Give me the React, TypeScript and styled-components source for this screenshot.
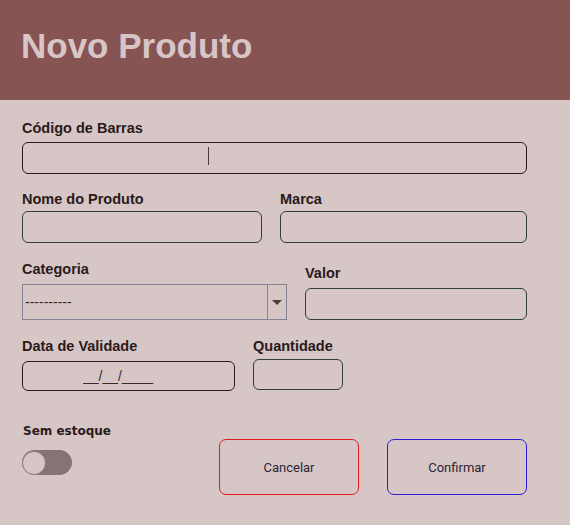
import React from "react";
import styled, { createGlobalStyle } from "styled-components";

const GlobalStyle = createGlobalStyle`
  html, body {
    margin: 0;
    padding: 0;
    background: #d6c6c6;
    font-family: "Liberation Sans", Arial, sans-serif;
  }
  * {
    box-sizing: border-box;
  }
`;

export default function App() {
  return (
    <>
      <GlobalStyle />
      <StyledPage>
        <Header>
          <h1>Novo Produto</h1>
        </Header>
        <Form onSubmit={(e) => e.preventDefault()}>
          <Field $gap={6}>
            <Label>Código de Barras</Label>
            <CaretWrap>
              <Input $height={32} $border="#2b1b1b" />
              <Caret />
            </CaretWrap>
          </Field>

          <Row $columns="240px 247px">
            <Field $gap={4}>
              <Label>Nome do Produto</Label>
              <Input $height={32} $border="#2f3e3e" />
            </Field>
            <Field $gap={4}>
              <Label>Marca</Label>
              <Input $height={32} $border="#2f3e3e" />
            </Field>
          </Row>

          <Row $columns="265px 222px" $align="end">
            <Field $gap={7}>
              <Label>Categoria</Label>
              <SelectBox>
                <Select defaultValue="">
                  <option value="">----------</option>
                </Select>
                <ArrowBox>
                  <svg width="10" height="6" viewBox="0 0 10 6">
                    <path d="M0 0 L10 0 L5 5 Z" fill="#4d3d3d" />
                  </svg>
                </ArrowBox>
              </SelectBox>
            </Field>
            <Field $gap={7}>
              <Label>Valor</Label>
              <Input $height={32} $border="#2f3e3e" />
            </Field>
          </Row>

          <Row $columns="213px 90px">
            <Field $gap={7}>
              <Label>Data de Validade</Label>
              <DateInput $height={30} $border="#2b1b1b" defaultValue="__/__/____" />
            </Field>
            <Field $gap={5}>
              <Label>Quantidade</Label>
              <Input $height={31} $border="#2f3e3e" />
            </Field>
          </Row>

          <Footer>
            <ToggleField>
              <ToggleLabel>Sem estoque</ToggleLabel>
              <Toggle type="button" aria-pressed="false">
                <Knob />
              </Toggle>
            </ToggleField>
            <Actions>
              <ActionButton type="button" $border="#e01c1c">
                Cancelar
              </ActionButton>
              <ActionButton type="submit" $border="#2a1ed2">
                Confirmar
              </ActionButton>
            </Actions>
          </Footer>
        </Form>
      </StyledPage>
    </>
  );
}

const StyledPage = styled.div`
  width: 570px;
  min-height: 525px;
  background: #d6c6c6;
`;

const Header = styled.header`
  height: 100px;
  background: #875454;
  padding: 0 0 0 21px;
  display: flex;
  align-items: flex-start;

  h1 {
    margin: 0;
    padding-top: 26px;
    font-size: 35px;
    line-height: 40px;
    font-weight: 700;
    color: #d7c5c7;
  }
`;

const Form = styled.form`
  display: flex;
  flex-direction: column;
  gap: 17px;
  padding: 20px 43px 0 22px;

  & > *:nth-child(3),
  & > *:nth-child(4) {
    margin-top: 1px;
  }
`;

const Row = styled.div<{ $columns: string; $align?: string }>`
  display: grid;
  grid-template-columns: ${({ $columns }) => $columns};
  column-gap: 18px;
  align-items: ${({ $align }) => $align || "start"};
`;

const Field = styled.div<{ $gap: number }>`
  display: flex;
  flex-direction: column;
  gap: ${({ $gap }) => $gap}px;
`;

const Label = styled.label`
  font-size: 14.5px;
  line-height: 16px;
  font-weight: 700;
  color: #2a1a1a;
`;

const Input = styled.input<{ $height: number; $border: string }>`
  width: 100%;
  height: ${({ $height }) => $height}px;
  border: 1px solid ${({ $border }) => $border};
  border-radius: 6px;
  background: transparent;
  padding: 0 8px;
  font-family: "Liberation Sans", Arial, sans-serif;
  font-size: 14px;
  color: #2a1a1a;
  outline: none;
`;

const DateInput = styled(Input)`
  padding-left: 60px;
  color: #3a2a2a;
`;

const CaretWrap = styled.div`
  position: relative;
`;

const Caret = styled.span`
  position: absolute;
  left: 186px;
  top: 5px;
  width: 1px;
  height: 18px;
  background: #4a3a3a;
`;

const SelectBox = styled.div`
  display: flex;
  height: 36px;
  border: 1px solid #858493;
`;

const Select = styled.select`
  flex: 1;
  appearance: none;
  border: none;
  background: transparent;
  padding: 0 2px;
  font-family: "Liberation Sans", Arial, sans-serif;
  font-size: 14px;
  color: #3a2a2a;
  outline: none;
`;

const ArrowBox = styled.div`
  width: 19px;
  border-left: 1px solid #858493;
  display: flex;
  align-items: center;
  justify-content: center;
  padding-top: 1px;
`;

const Footer = styled.div`
  display: flex;
  align-items: flex-start;
  margin-top: 15px;
`;

const ToggleField = styled.div`
  width: 197px;
  display: flex;
  flex-direction: column;
  gap: 11px;
`;

const ToggleLabel = styled.span`
  font-family: "DejaVu Sans", sans-serif;
  font-size: 12px;
  line-height: 16px;
  font-weight: 700;
  color: #2a1a1a;
  padding-left: 1px;
`;

const Toggle = styled.button`
  width: 50px;
  height: 25px;
  border: none;
  border-radius: 13px;
  background: #867373;
  padding: 0;
  display: flex;
  align-items: center;
  cursor: pointer;
`;

const Knob = styled.span`
  width: 24px;
  height: 24px;
  border-radius: 50%;
  background: #d6c6c6;
  border: 1px solid #8d7e7e;
`;

const Actions = styled.div`
  display: flex;
  gap: 28px;
  margin-top: 16px;
`;

const ActionButton = styled.button<{ $border: string }>`
  width: 140px;
  height: 56px;
  background: transparent;
  border: 1px solid ${({ $border }) => $border};
  border-radius: 7px;
  font-family: Roboto, "Liberation Sans", sans-serif;
  font-size: 13px;
  color: #2b2535;
  cursor: pointer;
`;
